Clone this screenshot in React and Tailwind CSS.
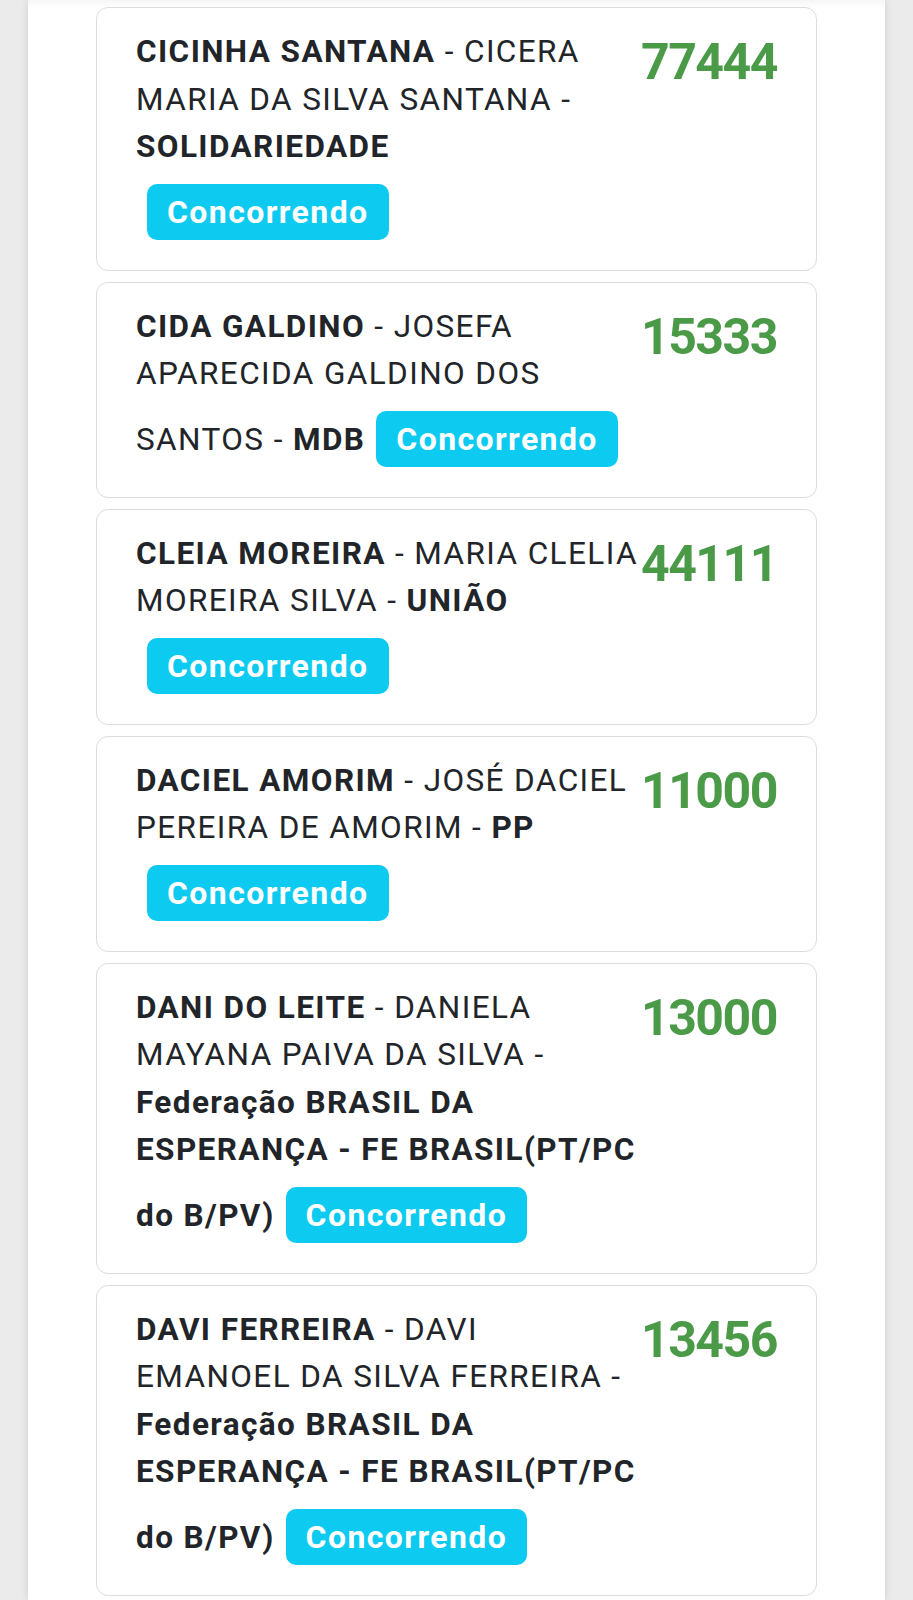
const candidates = [
  { short: 'CICINHA SANTANA', full: 'CICERA MARIA DA SILVA SANTANA', party: 'SOLIDARIEDADE', number: '77444' },
  { short: 'CIDA GALDINO', full: 'JOSEFA APARECIDA GALDINO DOS SANTOS', party: 'MDB', number: '15333' },
  { short: 'CLEIA MOREIRA', full: 'MARIA CLELIA MOREIRA SILVA', party: 'UNIÃO', number: '44111' },
  { short: 'DACIEL AMORIM', full: 'JOSÉ DACIEL PEREIRA DE AMORIM', party: 'PP', number: '11000' },
  {
    short: 'DANI DO LEITE',
    full: 'DANIELA MAYANA PAIVA DA SILVA',
    party: 'Federação BRASIL DA ESPERANÇA - FE BRASIL(PT/PC do B/PV)',
    number: '13000',
  },
  {
    short: 'DAVI FERREIRA',
    full: 'DAVI EMANOEL DA SILVA FERREIRA',
    party: 'Federação BRASIL DA ESPERANÇA - FE BRASIL(PT/PC do B/PV)',
    number: '13456',
  },
];

function CandidateCard({ candidate }) {
  return (
    <div className="grid grid-cols-[503px_1fr] rounded-[12px] border border-[#dcdcdc] bg-white pl-[39px] pr-[30px] pt-[20px] pb-[17px]">
      <p className="text-[31.5px] leading-[47.5px] tracking-[1.4px] text-[#212529]">
        <b className="font-bold">{candidate.short}</b> - {candidate.full} -{' '}
        <b className="font-bold">{candidate.party}</b>
        <span className="my-[13px] ml-[11px] inline-block rounded-[10px] bg-[#0dcaf0] px-[20px] py-[12px] text-[32px] font-bold leading-[32px] text-white">
          Concorrendo
        </span>
      </p>
      <div className="ml-[2px] mt-[4px] whitespace-nowrap text-[50px] font-bold leading-[1.2] tracking-[-1.5px] text-[#4a9a48]">
        {candidate.number}
      </div>
    </div>
  );
}

export default function App() {
  return (
    <div className="min-h-[1600px] bg-[#ebebeb] font-['Roboto',sans-serif]">
      <div className="mx-[28px] min-h-[1600px] bg-white shadow-[0_0_8px_rgba(0,0,0,0.12),inset_0_10px_8px_-8px_rgba(0,0,0,0.06)]">
        <div className="flex flex-col gap-[11px] px-[68px] pt-[7px]">
          {candidates.map((candidate) => (
            <CandidateCard key={candidate.number} candidate={candidate} />
          ))}
        </div>
      </div>
    </div>
  );
}
